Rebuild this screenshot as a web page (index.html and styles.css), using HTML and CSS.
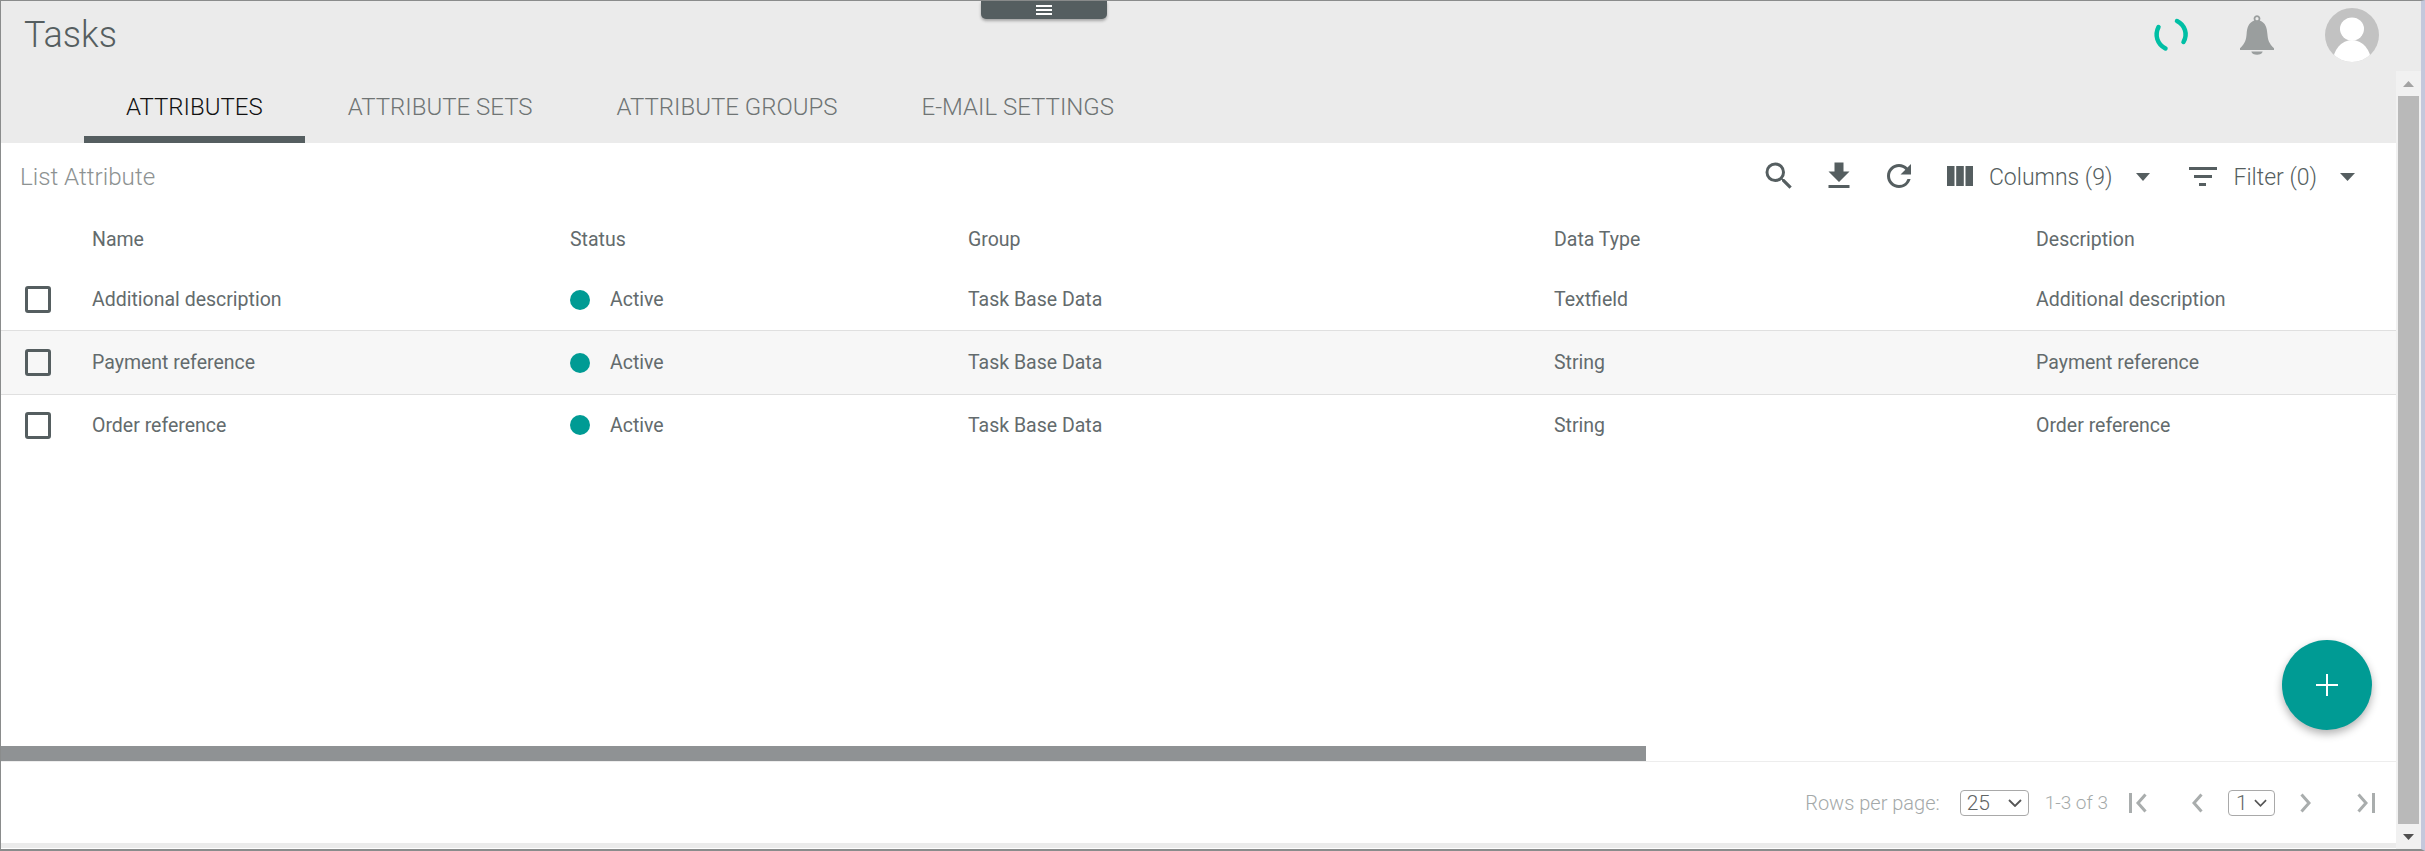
FILE: index.html
```html
<!DOCTYPE html>
<html lang="en">
<head>
<meta charset="utf-8">
<title>Tasks</title>
<link rel="stylesheet" href="styles.css">
</head>
<body>
<div class="frame">
  <header class="topbar">
    <h1 class="title">Tasks</h1>
    <div class="drawer-toggle">
      <svg width="16" height="10" viewBox="0 0 16 10"><path d="M0 0h16v2H0zM0 4h16v2H0zM0 8h16v2H0z" fill="#fff"/></svg>
    </div>
    <div class="top-actions">
      <svg class="spinner" width="42" height="40" viewBox="0 0 42 40" fill="none" stroke="#00bfa5" stroke-width="4.500" stroke-linecap="round"><path d="M8.500 12C4.500 20 7 29 15.500 33.500"/><path d="M27 6C35 10 38 19 33.500 27"/></svg>
      <svg class="bell" width="34" height="40" viewBox="0 0 36 42"><path fill="#9a9e9e" d="M18 0a3.600 3.600 0 0 0-3 5.600C9 8 7.500 13 7 20c-.5 6-1.500 10-7 15v2h36v-2c-5.500-5-6.500-9-7-15-.5-7-2-12-8-14.400A3.600 3.600 0 0 0 18 0zm0 2a1.700 1.700 0 1 1 0 3.400A1.700 1.700 0 0 1 18 2z"/><path fill="#9a9e9e" d="M12 38.500h12c-.5 2.500-3 3.500-6 3.500s-5.500-1-6-3.500z"/></svg>
      <svg class="avatar" width="54" height="54" viewBox="0 0 54 54"><clipPath id="av"><circle cx="27" cy="27" r="27"/></clipPath><g clip-path="url(#av)"><rect width="54" height="54" fill="#c2c2c2"/><ellipse cx="27" cy="21" rx="12" ry="11.500" fill="#fff"/><ellipse cx="27" cy="54" rx="19" ry="22" fill="#fff"/></g></svg>
    </div>
  </header>
  <div class="workspace">
    <main class="main">
      <nav class="tabs">
        <a class="tab tab-active">ATTRIBUTES</a>
        <a class="tab">ATTRIBUTE SETS</a>
        <a class="tab">ATTRIBUTE GROUPS</a>
        <a class="tab">E-MAIL SETTINGS</a>
      </nav>
      <div class="toolbar">
        <span class="list-title">List Attribute</span>
        <div class="tools">
          <svg class="tool tool-search" width="36" height="36" viewBox="0 0 24 24"><path fill="#555e60" d="M15.500 14h-.79l-.28-.27A6.470 6.470 0 0 0 16 9.500 6.500 6.500 0 1 0 9.500 16c1.610 0 3.090-.59 4.230-1.570l.27.28v.79l5 4.990L20.490 19l-4.990-5zm-6 0C7.010 14 5 11.990 5 9.500S7.010 5 9.500 5 14 7.010 14 9.500 11.990 14 9.500 14z"/></svg>
          <svg class="tool tool-download" width="36" height="36" viewBox="0 0 24 24"><path fill="#555e60" d="M19 9h-4V3H9v6H5l7 7 7-7zM5 18v2h14v-2H5z"/></svg>
          <svg class="tool tool-refresh" width="36" height="36" viewBox="0 0 24 24"><path fill="#555e60" d="M17.650 6.350A7.958 7.958 0 0 0 12 4c-4.420 0-7.990 3.580-7.990 8s3.570 8 7.990 8c3.730 0 6.840-2.550 7.730-6h-2.080A5.990 5.990 0 0 1 12 18c-3.310 0-6-2.690-6-6s2.690-6 6-6c1.660 0 3.140.69 4.220 1.780L13 11h7V4l-2.350 2.350z"/></svg>
          <svg class="tool tool-columns" width="26" height="20" viewBox="0 0 26 20"><path fill="#555e60" d="M0 0h7.500v20H0zM9.200 0h7.600v20H9.200zM18.500 0H26v20h-7.500z"/></svg>
          <span class="tool-label">Columns (9)</span>
          <svg class="caret caret-columns" width="14" height="8" viewBox="0 0 14 8"><path fill="#555e60" d="M0 0h14L7 8z"/></svg>
          <svg class="tool tool-filter" width="28" height="20" viewBox="0 0 28 20"><path fill="#555e60" d="M0 1h28v3H0zM5 9h18v3H5zM10 17h7v3h-7z"/></svg>
          <span class="tool-label">Filter (0)</span>
          <svg class="caret caret-filter" width="15" height="8" viewBox="0 0 15 8"><path fill="#555e60" d="M0 0h15L7.500 8z"/></svg>
        </div>
      </div>
      <section class="table">
        <div class="row row-head">
          <span></span><span>Name</span><span>Status</span><span>Group</span><span>Data Type</span><span>Description</span>
        </div>
        <div class="row row-body row-a">
          <span class="check"></span><span>Additional description</span><span class="status"><i class="dot"></i>Active</span><span>Task Base Data</span><span>Textfield</span><span>Additional description</span>
        </div>
        <div class="row row-body row-b">
          <span class="check"></span><span>Payment reference</span><span class="status"><i class="dot"></i>Active</span><span>Task Base Data</span><span>String</span><span>Payment reference</span>
        </div>
        <div class="row row-c">
          <span class="check"></span><span>Order reference</span><span class="status"><i class="dot"></i>Active</span><span>Task Base Data</span><span>String</span><span>Order reference</span>
        </div>
        <button class="fab" type="button" aria-label="Add">
          <svg width="22" height="22" viewBox="0 0 22 22"><path fill="#fff" d="M10 0h2v10h10v2H12v10h-2V12H0v-2h10z"/></svg>
        </button>
      </section>
      <div class="hscroll"><div class="hscroll-thumb"></div></div>
      <footer class="pager">
        <span class="rows-label">Rows per page:</span>
        <span class="select select-rows">25<svg width="14" height="8" viewBox="0 0 14 8" fill="none" stroke="#555" stroke-width="1.800"><path d="M1 1l6 6 6-6"/></svg></span>
        <span class="range">1-3 of 3</span>
        <svg class="nav nav-first" width="18" height="20" viewBox="0 0 18 20" fill="none" stroke="#a9adad" stroke-width="3"><path d="M1.500 0v20M16.500 1.500L9 10l7.500 8.500"/></svg>
        <svg class="nav nav-prev" width="11" height="20" viewBox="0 0 11 20" fill="none" stroke="#a9adad" stroke-width="3"><path d="M9.500 1.500L2 10l7.500 8.500"/></svg>
        <span class="select select-page">1<svg width="13" height="8" viewBox="0 0 14 8" fill="none" stroke="#555" stroke-width="1.800"><path d="M1 1l6 6 6-6"/></svg></span>
        <svg class="nav nav-next" width="11" height="20" viewBox="0 0 11 20" fill="none" stroke="#a9adad" stroke-width="3"><path d="M1.500 1.500L9 10l-7.500 8.500"/></svg>
        <svg class="nav nav-last" width="18" height="20" viewBox="0 0 18 20" fill="none" stroke="#a9adad" stroke-width="3"><path d="M1.500 1.500L9 10l-7.500 8.500M16.500 0v20"/></svg>
      </footer>
      <div class="strip"></div>
    </main>
    <aside class="vscroll">
      <div class="vbtn"><svg width="11" height="6" viewBox="0 0 11 6"><path fill="#a3a3a3" d="M5.500 0L11 6H0z"/></svg></div>
      <div class="vthumb"></div>
      <div class="vbtn"><svg width="11" height="6" viewBox="0 0 11 6"><path fill="#505050" d="M0 0h11L5.500 6z"/></svg></div>
    </aside>
  </div>
</div>
</body>
</html>
```
FILE: styles.css
```css
* { box-sizing: border-box; }
html, body { margin: 0; padding: 0; }
body { width: 2425px; height: 851px; overflow: hidden; font-family: Roboto, "Liberation Sans", sans-serif; font-weight: 400; color: #555e60; background: #fff; }
.frame { width: 2425px; height: 851px; display: flex; flex-direction: column; border-top: 1px solid #8a8c8c; border-left: 1px solid #8a8c8c; border-bottom: 2px solid #8a8c8c; border-right: 4px solid #c4c8dc; }
.topbar { position: relative; height: 70px; flex: none; background: #ebebeb; display: flex; align-items: center; padding-left: 23px; }
.title { margin: 0; font-size: 36px; font-weight: 300; color: #555e60; position: relative; top: -1px; }
.drawer-toggle { position: absolute; left: 980px; top: 0; width: 126px; height: 18px; background: #555e60; border-radius: 0 0 5px 5px; box-shadow: 0 2px 3px rgba(0,0,0,.3); display: flex; align-items: center; justify-content: center; }
.top-actions { margin-left: auto; display: flex; align-items: center; }
.spinner { margin-right: 48px; margin-bottom: 2px; }
.bell { margin-right: 51px; margin-bottom: 3px; }
.avatar { margin-right: 42px; margin-bottom: 2px; }
.workspace { flex: 1; display: flex; min-height: 0; }
.main { flex: 1; min-width: 0; display: flex; flex-direction: column; }
.tabs { height: 72px; flex: none; background: #ebebeb; display: flex; padding-left: 83px; }
.tab { height: 72px; padding: 18px 42px 0; font-size: 24px; font-weight: 300; line-height: 36px; color: #6f7474; }
.tab-active { color: #111; border-bottom: 7px solid #555e60; margin-right: 1px; }
.toolbar { height: 66px; flex: none; display: flex; align-items: center; padding-left: 19px; }
.list-title { font-size: 24.200px; font-weight: 300; color: #8d9292; position: relative; top: 1px; }
.tools { margin-left: auto; display: flex; align-items: center; padding-right: 41px; }
.tool-search { margin-right: 24px; }
.tool-download { margin-right: 24px; }
.tool-refresh { margin-right: 30px; }
.tool-columns { margin-right: 16px; }
.tool-label { font-size: 23px; font-weight: 300; color: #555e60; position: relative; top: 1px; }
.caret-columns { margin: 2px 39px 0 24px; }
.tool-filter { margin-right: 16px; }
.caret-filter { margin: 2px 0 0 23px; }
.table { flex: 1; position: relative; }
.row { display: grid; grid-template-columns: 91px 478px 398px 586px 482px 1fr; align-items: center; font-size: 19.500px; font-weight: 400; color: #636b6d; }
.row-head { height: 60px; }
.row-body { border-bottom: 1px solid #e0e0e0; }
.row-a { height: 62px; }
.row-b { height: 64px; background: #f7f7f7; }
.row-c { height: 60px; }
.check { width: 26px; height: 27px; margin-left: 24px; border: 3px solid #555e60; border-radius: 3px; }
.status { display: flex; align-items: center; }
.dot { width: 20px; height: 20px; border-radius: 50%; background: #009b94; margin-right: 20px; }
.fab { position: absolute; left: 2281px; top: 431px; width: 90px; height: 90px; border: 0; border-radius: 50%; background: #009b94; box-shadow: 0 4px 8px rgba(0,0,0,.3); display: flex; align-items: center; justify-content: center; padding: 0; }
.hscroll { height: 15px; flex: none; }
.hscroll-thumb { width: 1645px; height: 15px; background: #8f9294; }
.pager { height: 82px; flex: none; border-top: 1px solid #ededed; display: flex; align-items: center; justify-content: flex-end; color: #a4a9a9; font-size: 20px; font-weight: 300; padding-right: 21px; }
.rows-label { margin-right: 20px; }
.select { display: flex; align-items: center; border: 1px solid #a9a9a9; border-radius: 4px; height: 26px; color: #5f6464; font-size: 21px; }
.select-rows { width: 69px; padding: 0 6px; justify-content: space-between; margin-right: 16px; }
.select-page { width: 47px; padding: 0 7px; justify-content: space-between; margin: 0 25px; }
.range { margin-right: 21px; font-size: 19px; }
.nav-first { margin-right: 45px; }
.nav-next { margin-right: 46px; }
.strip { height: 5px; flex: none; background: #ebebeb; margin-bottom: 1px; }
.vscroll { width: 25px; flex: none; display: flex; flex-direction: column; background: #f1f1f1; }
.vbtn { height: 25px; flex: none; display: flex; align-items: center; justify-content: center; }
.vthumb { flex: 1; background: #b9b9b9; margin: 0 2px; }
```
